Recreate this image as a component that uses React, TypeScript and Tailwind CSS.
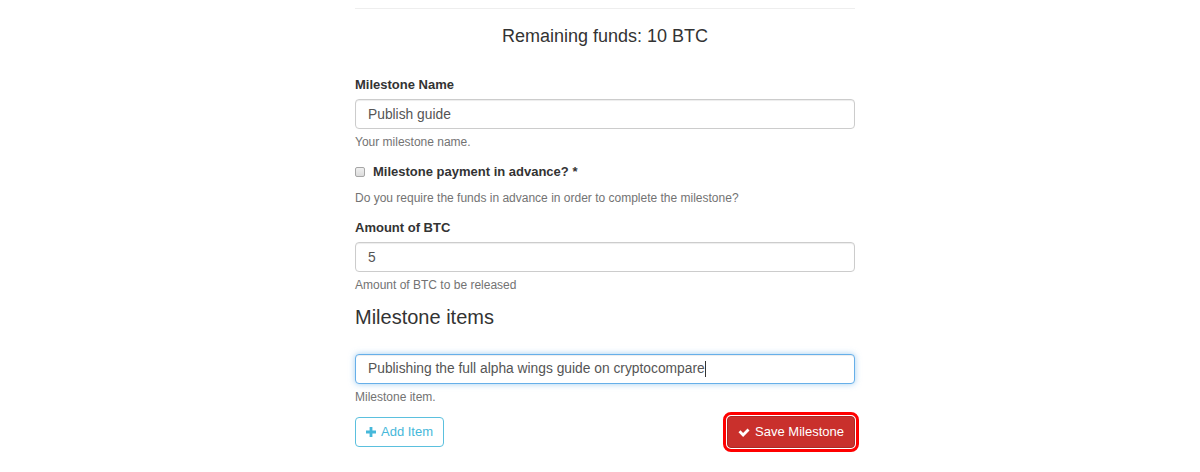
import React from 'react';

const font = { fontFamily: '"Liberation Sans", Arial, sans-serif' };

function HelpText({ children }: { children: React.ReactNode }) {
  return <p className="mt-[5px] text-[12px] leading-[16px] text-[#737373]">{children}</p>;
}

function FieldLabel({ children }: { children: React.ReactNode }) {
  return <label className="block mb-[5px] text-[13px] leading-[18px] font-bold text-[#333]">{children}</label>;
}

function TextInput({ value }: { value: string }) {
  return (
    <input
      readOnly
      defaultValue={value}
      className="block w-full h-[30px] px-[12px] text-[13.8px] text-[#555] bg-white border border-[#ccc] rounded-[4px] shadow-[inset_0_1px_1px_rgba(0,0,0,0.075)] outline-none"
    />
  );
}

export default function App() {
  return (
    <div className="min-h-screen bg-white flex justify-center pl-[10px]" style={font}>
      <div className="w-[500px] pt-2">
        <div className="border-t border-[#eee]" />
        <h4 className="mt-[17px] text-center text-[18px] leading-[20px] text-[#333]">Remaining funds: 10 BTC</h4>

        <div className="mt-[30px]">
          <FieldLabel>Milestone Name</FieldLabel>
          <TextInput value="Publish guide" />
          <HelpText>Your milestone name.</HelpText>
        </div>

        <div className="mt-[13px] flex items-center h-[18px]">
          <span className="w-[10px] h-[10px] border border-[#a6a6a6] rounded-[2px] bg-gradient-to-b from-[#f0f0f0] to-[#dcdcdc]" />
          <span className="ml-[8px] text-[13px] font-bold text-[#333]">Milestone payment in advance? *</span>
        </div>
        <p className="mt-[9px] text-[12px] leading-[16px] text-[#737373]">
          Do you require the funds in advance in order to complete the milestone?
        </p>

        <div className="mt-[13px]">
          <FieldLabel>Amount of BTC</FieldLabel>
          <TextInput value="5" />
          <HelpText>Amount of BTC to be released</HelpText>
        </div>

        <h3 className="mt-[12px] text-[20px] leading-[24px] text-[#333]">Milestone items</h3>

        <div className="mt-[25px]">
          <div className="flex items-center w-full h-[30px] px-[12px] text-[13.8px] text-[#555] bg-white border border-[#66afe9] rounded-[4px] shadow-[inset_0_1px_1px_rgba(0,0,0,0.075),0_0_6px_rgba(102,175,233,0.6)]">
            <span>Publishing the full alpha wings guide on cryptocompare</span>
            <span className="w-px h-[16px] bg-[#333]" />
          </div>
          <HelpText>Milestone item.</HelpText>
        </div>

        <div className="mt-[7px] flex items-center justify-between">
          <button className="flex items-center h-[30px] px-[10px] text-[13px] text-[#46b8da] bg-white border border-[#5bc0de] rounded-[4px]">
            <svg width="10" height="10" viewBox="0 0 10 10" className="mr-[5px]">
              <path d="M3.6 0h2.8v3.6H10v2.8H6.4V10H3.6V6.4H0V3.6h3.6z" fill="#46b8da" />
            </svg>
            Add Item
          </button>
          <div className="p-px border-[3px] border-[#ff0000] rounded-[8px] -mr-[4px]">
            <button className="flex items-center h-[32px] px-[10px] text-[13px] text-white bg-[#c9302c] border border-[#ac2925] rounded-[4px]">
              <svg width="12" height="10" viewBox="0 0 12 10" className="mr-[5px]">
                <path d="M0.5 5.3l2-2 2.6 2.6L9.5 1.5l2 2-6.4 6.4z" fill="#fff" />
              </svg>
              Save Milestone
            </button>
          </div>
        </div>
      </div>
    </div>
  );
}
